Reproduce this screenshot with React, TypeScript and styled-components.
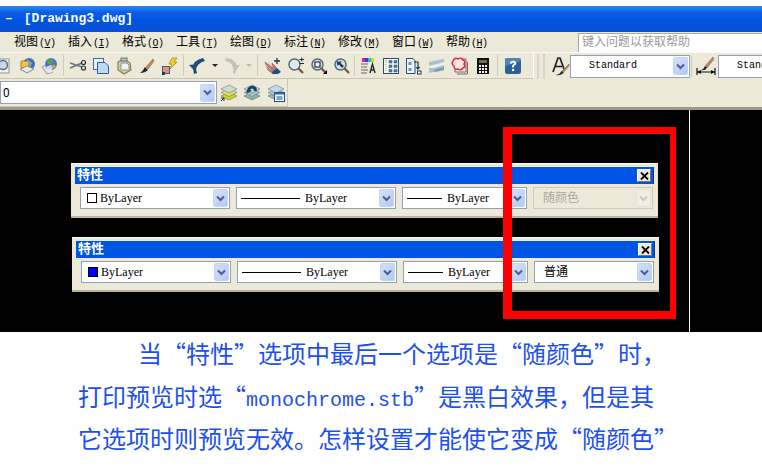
import React from 'react';
import styled, { createGlobalStyle } from 'styled-components';

const GlobalStyle = createGlobalStyle`
  html, body {
    margin: 0;
    padding: 0;
    background: #fff;
  }
`;

const cjk = '"Noto Sans CJK SC", "Noto Sans", sans-serif';
const mono = '"Liberation Mono", "Noto Sans CJK SC", monospace';
const serif = '"Liberation Serif", "Noto Sans CJK SC", serif';

const Page = styled.div`
  width: 762px;
  height: 476px;
  overflow: hidden;
  background: #fff;
  padding-top: 6px;
  box-sizing: border-box;
  font-family: ${cjk};
`;

const TitleBar = styled.div`
  height: 26px;
  display: flex;
  align-items: center;
  gap: 11px;
  padding: 0 0 2px 5px;
  box-sizing: border-box;
  background: linear-gradient(#2f86f2 0, #0a5ee6 25%, #0054e3 55%, #0a50d2 100%);
  color: #fff;
  font: bold 13px ${mono};
`;

const MenuBar = styled.div`
  height: 20px;
  display: flex;
  align-items: center;
  padding-left: 14px;
  background: #ece9d8;
  font-size: 12px;
  color: #000;
`;

const MenuItem = styled.span`
  width: 54px;
  flex: none;
  white-space: nowrap;
  margin-bottom: 3px;
`;

const MenuKey = styled.span`
  font: 10px ${mono};
  margin-left: 1px;
  letter-spacing: -0.5px;

  u {
    text-decoration-thickness: 1px;
  }
`;

const HelpBox = styled.div`
  margin-left: auto;
  width: 184px;
  height: 19px;
  box-sizing: border-box;
  padding-left: 3px;
  background: #fff;
  border-left: 1px solid #aca899;
  border-top: 1px solid #aca899;
  color: #9a9a9a;
  font-size: 12px;
  line-height: 14px;
`;

const ToolRow = styled.div`
  height: 27px;
  display: flex;
  align-items: center;
  overflow: hidden;
  background: #ece9d8;
  border-top: 1px solid #fbfaf4;
  box-sizing: border-box;
`;

const MainBar = styled.div`
  width: 542px;
  margin-left: -8px;
  flex: none;
  height: 26px;
  display: flex;
  align-items: center;
  border-right: 1px solid #fff;
  border-bottom: 1px solid #c9c6b4;
  box-sizing: border-box;
`;

const ToolButton = styled.div<{ $w?: number }>`
  width: ${(p) => p.$w ?? 23}px;
  flex: none;
  display: flex;
  align-items: center;
  justify-content: center;
`;

const Separator = styled.div<{ $mx?: number }>`
  width: 1px;
  height: 21px;
  flex: none;
  margin: 0 ${(p) => p.$mx ?? 3}px;
  background: #cfcbb8;
`;

const Grip = styled.div`
  width: 8px;
  height: 25px;
  flex: none;
  margin: 0 4px 0 3px;
  border-left: 2px solid #d8d4c2;
  border-right: 2px solid #d8d4c2;
  box-sizing: border-box;
`;

const Combo = styled.div<{ $w: number; $off?: boolean; $h?: number }>`
  width: ${(p) => p.$w}px;
  height: ${(p) => p.$h ?? 22}px;
  flex: none;
  display: flex;
  align-items: center;
  box-sizing: border-box;
  border: 1px solid ${(p) => (p.$off ? '#cdcbbd' : '#8ea3b5')};
  background: ${(p) => (p.$off ? '#ece9d8' : '#fff')};
  font: 12px ${serif};
  color: #000;
  white-space: nowrap;
`;

const ComboBody = styled.div<{ $pl?: number; $gap?: number }>`
  flex: 1;
  min-width: 0;
  display: flex;
  align-items: center;
  gap: ${(p) => p.$gap ?? 5}px;
  padding-left: ${(p) => p.$pl ?? 4}px;
`;

const ArrowBox = styled.div<{ $off?: boolean }>`
  width: 15px;
  height: 18px;
  margin-right: 1px;
  flex: none;
  display: flex;
  align-items: center;
  justify-content: center;
  border-radius: 2px;
  background: ${(p) => (p.$off ? '#f1efe4' : 'linear-gradient(135deg, #d5e1fb, #b5c9f5)')};
  border: 1px solid ${(p) => (p.$off ? '#e6e3d6' : '#c6d4f3')};
  box-sizing: border-box;
`;

const StyleName = styled.span`
  font: 10px ${mono};
  margin-bottom: 1px;
`;

const LayerRow = styled(ToolRow)`
  border-top: 0;
  border-bottom: 3px solid #9d9a8b;
  height: 31px;
`;

const LayerBar = styled.div`
  width: 288px;
  flex: none;
  height: 28px;
  display: flex;
  align-items: center;
  border-right: 1px solid #c9c6b4;
  border-bottom: 1px solid #c9c6b4;
  box-sizing: border-box;
`;

const Canvas = styled.div`
  position: relative;
  height: 222px;
  background: #000;
  padding: 53px 0 0 71px;
  box-sizing: border-box;
`;

const Crosshair = styled.div`
  position: absolute;
  left: 689px;
  top: 0;
  bottom: 0;
  width: 1px;
  background: #fff;
`;

const RedFrame = styled.div`
  position: absolute;
  left: 503px;
  top: 17px;
  width: 173px;
  height: 192px;
  box-sizing: border-box;
  border-style: solid;
  border-color: #f00;
  border-width: 7px 6px 8px 9px;
`;

const Palette = styled.div<{ $shift?: number }>`
  width: 587px;
  height: 55px;
  margin-left: ${(p) => p.$shift ?? 0}px;
  margin-bottom: 19px;
  padding: 3px 4px 0;
  box-sizing: border-box;
  background: #ece9d8;
  border-top: 1px solid #fbfaf3;
  border-bottom: 2px solid #b7b4a4;
`;

const PaletteTitle = styled.div`
  height: 17px;
  display: flex;
  align-items: center;
  justify-content: space-between;
  padding: 0 2px;
  background: #0054e3;
  color: #fff;
  border-right: 1px solid #0a3a9c;
`;

const PaletteLabel = styled.span`
  font-size: 13px;
  font-weight: bold;
  line-height: 13px;
  margin-bottom: 5px;
`;

const CloseButton = styled.div`
  width: 14px;
  height: 13px;
  display: flex;
  align-items: center;
  justify-content: center;
  background: #ece9d8;
  border: 1px solid #fff;
  border-right-color: #777;
  border-bottom-color: #777;
  box-sizing: border-box;
`;

const PaletteBody = styled.div`
  display: flex;
  gap: 6px;
  padding: 3px 0 0 5px;
`;

const Swatch = styled.span<{ $color: string }>`
  width: 10px;
  height: 10px;
  flex: none;
  box-sizing: border-box;
  border: 1px solid #000;
  background: ${(p) => p.$color};
  margin-left: 1px;
`;

const SwatchLabel = styled.span`
  margin-left: -1px;
`;

const LineSample = styled.span<{ $w: number }>`
  width: ${(p) => p.$w}px;
  height: 1px;
  flex: none;
  background: #000;
`;

const StyleLabel = styled.span<{ $off?: boolean }>`
  font: 12px ${cjk};
  color: ${(p) => (p.$off ? '#aca899' : '#000')};
  margin-bottom: 3px;
`;

const Note = styled.div`
  padding: 0 0 0 78px;
  color: #1c50ee;
  font-size: 24px;
`;

const NoteLine = styled.div<{ $indent?: number }>`
  height: 42.5px;
  line-height: 42.5px;
  white-space: nowrap;
  padding-left: ${(p) => p.$indent ?? 0}px;
`;

const Latin = styled.span`
  font: 20px/1 ${mono};
`;

const Chevron = ({ off }: { off?: boolean }) => (
  <svg width="9" height="7" viewBox="0 0 9 7">
    <path d="M1 1.5 L4.5 5 L8 1.5" fill="none" stroke={off ? '#c9c7bb' : '#4d6185'} strokeWidth="2" />
  </svg>
);

const Arrow = ({ off }: { off?: boolean }) => (
  <ArrowBox $off={off}>
    <Chevron off={off} />
  </ArrowBox>
);

const Ico = ({ children, w = 18, h = 18 }: { children: React.ReactNode; w?: number; h?: number }) => (
  <svg width={w} height={h} viewBox={`0 0 ${w} ${h}`}>
    {children}
  </svg>
);

const Magnifier = ({ glass = '#dfe9ee' }: { glass?: string }) => (
  <>
    <circle cx="7.5" cy="7.5" r="5.5" fill={glass} stroke="#54686f" strokeWidth="1.4" />
    <path d="M11.5 11.5 L16 16" stroke="#7a5a3a" strokeWidth="2.4" />
  </>
);

const PreviewIcon = () => (
  <Ico>
    <rect x="2" y="2" width="12" height="14" fill="#f2f2f2" stroke="#8a9aa8" />
    <circle cx="8" cy="8" r="4.5" fill="#c8d8e6" stroke="#5b6d7d" strokeWidth="1.4" />
  </Ico>
);
const PublishIcon = () => (
  <Ico>
    <circle cx="11" cy="7" r="6" fill="#3f6fc4" />
    <path d="M9 2 L14 6 L11 12 Z" fill="#7fb0e6" />
    <rect x="3" y="4" width="8" height="7" rx="1" fill="#f0c93a" stroke="#9a7a18" />
    <path d="M2 12 L9 9 L16 12 L9 16 Z" fill="#e8e8e8" stroke="#8a8a8a" />
  </Ico>
);
const GlobeIcon = () => (
  <Ico>
    <path d="M1 10 L9 6 L12 15 L6 17 Z" fill="#dcdcdc" stroke="#9a9aa6" />
    <circle cx="10" cy="7" r="6" fill="#3f7bd0" />
    <path d="M6 3 Q10 1 13 4 Q11 8 7 7 Z" fill="#5aa04a" />
    <path d="M10 8 Q14 7 15 10 Q12 13 10 11 Z" fill="#d8a03a" />
    <path d="M5 10 L10 8 L12 15 L7 16 Z" fill="#eaeaf2" opacity="0.85" />
  </Ico>
);
const ScissorsIcon = () => (
  <Ico>
    <path d="M1 6 L13 10 M1 11 L13 6" stroke="#6b7480" strokeWidth="1.5" />
    <circle cx="14.5" cy="5.5" r="2" fill="none" stroke="#25303a" strokeWidth="1.2" />
    <circle cx="14.5" cy="11" r="2" fill="none" stroke="#25303a" strokeWidth="1.2" />
  </Ico>
);
const CopyIcon = () => (
  <Ico>
    <rect x="1.5" y="1.5" width="10" height="11" fill="#e9f2fb" stroke="#3f6f9f" />
    <path d="M5.5 5.5 H13 L16.5 9 V16.5 H5.5 Z" fill="#bcd9f0" stroke="#2f5f95" />
  </Ico>
);
const PasteIcon = () => (
  <Ico>
    <path d="M3 5 L9 2 L15 6 L16 13 L9 17 L3 13 Z" fill="#d8cfa0" stroke="#8d8340" strokeWidth="1.2" />
    <rect x="6" y="1" width="6" height="3" fill="#b8bcc0" stroke="#70757a" />
    <path d="M6 6 H12 L14 8 V13 H6 Z" fill="#eef3f8" stroke="#7f94aa" />
  </Ico>
);
const BrushIcon = () => (
  <Ico>
    <path d="M15 2 L8 10 L10 12 L16 4 Z" fill="#c9825f" stroke="#8a4f38" strokeWidth="0.5" />
    <path d="M7 10 L10 13 Q7 16 2 16 Q5 14 7 10 Z" fill="#23272b" />
  </Ico>
);
const MatchIcon = () => (
  <Ico>
    <path d="M11 1 H16 L13 5 H16 L9 12 L11 7 H8 Z" fill="#f2d21f" stroke="#8a7a18" strokeWidth="0.6" />
    <rect x="1.5" y="9.5" width="7" height="7" fill="#e8907a" stroke="#3d5f80" />
    <rect x="1" y="15" width="3" height="3" fill="#1c3f6a" />
  </Ico>
);
const UndoIcon = ({ color = '#1f4a7d' }: { color?: string }) => (
  <Ico w={20}>
    <path d="M8 16 Q5 9 13 5 L16 4 L14 1 Q4 3 4 11 L5 17 Z" fill={color} transform="translate(1 0)" />
    <path d="M1 8 L6 13 L10 7 Z" fill={color} />
  </Ico>
);
const RedoIcon = () => (
  <Ico w={20}>
    <path d="M4 1 L9 2 Q15 5 15 11 L13 17 L11 16 Q13 9 7 5 L3 4 Z" fill="#c3c3b8" />
    <path d="M10 8 L18 8 L13 14 Z" fill="#c3c3b8" />
  </Ico>
);
const DropTick = ({ off }: { off?: boolean }) => (
  <svg width="6" height="3" viewBox="0 0 6 3">
    <path d="M0 0 H6 L3 3 Z" fill={off ? '#bdbdb2' : '#1a2a3a'} />
  </svg>
);
const PanIcon = () => (
  <Ico>
    <path d="M1 5 L9 11 L8 6 L12 10 L13 15 L9 17 L4 13 Z" fill="#b87a78" stroke="#83605f" strokeWidth="0.6" />
    <path d="M2 8 L7 13 M4 5 L9 10" stroke="#e0c5c0" strokeWidth="0.8" />
    <path d="M8 15 L13 11 L17 15 L14 17 H9 Z" fill="#1f4f80" />
    <path d="M13 1 V7 M10 4 H16" stroke="#1d3550" strokeWidth="1.3" />
  </Ico>
);
const ZoomPlusIcon = () => (
  <Ico>
    <Magnifier />
    <path d="M12.5 2.5 H17 M14.7 0.5 V4.5 M12.5 6.5 H17" stroke="#22303a" strokeWidth="1" />
  </Ico>
);
const ZoomWindowIcon = () => (
  <Ico>
    <Magnifier glass="#cfdde6" />
    <rect x="5" y="5" width="5" height="5" fill="#eef3f6" stroke="#20384f" strokeWidth="1.2" />
    <path d="M17 13 V17 H13 Z" fill="#000" />
  </Ico>
);
const ZoomPrevIcon = () => (
  <Ico>
    <Magnifier glass="#d5e0e6" />
    <path d="M3.5 4.5 H9 L7.5 6 L11 9 L9 11 L6 7.5 L4.5 9 Z" fill="#1f3f63" />
  </Ico>
);
const PropsIcon = () => (
  <Ico>
    <rect x="3" y="1" width="3" height="4" fill="#e0208c" />
    <rect x="6" y="1" width="3" height="4" fill="#2a3fe0" />
    <rect x="9" y="1" width="3" height="4" fill="#18c0d8" />
    <rect x="12" y="1" width="3" height="4" fill="#e8d020" />
    <path d="M2 7 H9 M2 10 H8 M2 13 H9 M2 16 H8" stroke="#6a6a60" strokeWidth="1.2" />
    <path d="M11 16 L13.5 7 L16 16 M12 13 H15" fill="none" stroke="#1e2a36" strokeWidth="1.4" />
  </Ico>
);
const DesignIcon = () => (
  <Ico>
    <rect x="1.5" y="1.5" width="15" height="15" fill="#f4f6f2" stroke="#24507f" />
    <path d="M4 3 V15" stroke="#9a9a5a" strokeDasharray="1 1" />
    <path d="M7 3.5 H10 V6 H7 Z M12 3.5 H15 V6 H12 Z M7 8 H10 V10.5 H7 Z M12 8 H15 V10.5 H12 Z M7 12.5 H10 V15 H7 Z M12 12.5 H15 V15 H12 Z" fill="#5a7fa0" stroke="#24507f" strokeWidth="0.5" />
  </Ico>
);
const ToolPaletteIcon = () => (
  <Ico>
    <path d="M1.5 1.5 H8 L10 3.5 V16.5 H1.5 Z" fill="#eef4f8" stroke="#24507f" />
    <rect x="3.5" y="5" width="3" height="3" fill="#6f93b5" />
    <rect x="3.5" y="11" width="3" height="3" fill="#6f93b5" />
    <path d="M9 5 H13 V11" fill="none" stroke="#26323e" strokeWidth="1.2" />
    <path d="M10.5 10 H15.5 L13 13 Z" fill="#1f3f63" />
    <rect x="12.5" y="14" width="3.5" height="3" fill="#fff" stroke="#26323e" />
  </Ico>
);
const SheetIcon = () => (
  <Ico>
    <path d="M1 5 L16 2 V13 L1 16 Z" fill="#a9bfcd" />
    <path d="M1 9 L16 5 V8 L6 11 L1 11 Z" fill="#e8eef2" />
    <path d="M6 13 L16 10 V13 L7 15 Z" fill="#7e9cb0" />
  </Ico>
);
const MarkupIcon = () => (
  <Ico>
    <path d="M4 2 H15 V15 H4 Z" fill="#f3eee0" stroke="#6f6f68" />
    <path d="M16.5 5 V17 H6" fill="none" stroke="#6f6f68" />
    <path d="M2 4 Q4 0 7 2 Q10 0 12 3 Q15 4 13 7 Q15 10 12 11 Q10 14 7 12 Q3 13 3 9 Q0 7 2 4 Z" fill="#fbe3e6" stroke="#e02848" strokeWidth="1.5" />
  </Ico>
);
const CalcIcon = () => (
  <Ico>
    <rect x="3" y="1" width="12" height="16" fill="#111" />
    <rect x="5" y="3" width="8" height="3" fill="#6a6f58" />
    <path d="M5 8 H7 V10 H5 Z M8 8 H10 V10 H8 Z M11 8 H13 V10 H11 Z M5 11 H7 V13 H5 Z M8 11 H10 V13 H8 Z M11 11 H13 V13 H11 Z M5 14 H7 V16 H5 Z M8 14 H10 V16 H8 Z M11 14 H13 V16 H11 Z" fill="#f4f4f4" />
  </Ico>
);
const HelpIcon = () => (
  <Ico>
    <rect x="1" y="1" width="16" height="16" rx="2.5" fill="#2d6096" />
    <path d="M1 9 L17 4 V3 Q17 1 15 1 H3 Q1 1 1 3 Z" fill="#4f86bb" />
    <path d="M6 6.5 Q6 3.8 9 3.8 Q12.3 3.8 12.3 6.3 Q12.3 8 10 9 V10.5 H8 V8.2 Q10.2 7.4 10.2 6.3 Q10.2 5.5 9 5.5 Q8 5.5 8 6.8 Z" fill="#fff" />
    <rect x="8" y="12" width="2.1" height="2.1" fill="#fff" />
  </Ico>
);
const TextStyleIcon = () => (
  <Ico w={20} h={20}>
    <path d="M3 16 L8 2 H10 L14 13 M5 10.5 H12" fill="none" stroke="#1e2228" strokeWidth="1.7" />
    <path d="M19 8 L11 16 L13 17 L19 10 Z" fill="#b98a62" stroke="#7a5a3a" strokeWidth="0.5" />
    <path d="M6 19 Q10 18 12 15 L13.5 17 Q10 20 6 19 Z" fill="#23272b" />
  </Ico>
);
const DimStyleIcon = () => (
  <Ico w={20} h={20}>
    <path d="M1 12 V19 M19 12 V19 M1 16 H19" stroke="#111" strokeWidth="1.2" />
    <path d="M1 16 L5 14 V18 Z M19 16 L15 14 V18 Z" fill="#111" />
    <path d="M17 1 L9 10 L11 12 L18 3 Z" fill="#b98a62" stroke="#7a5a3a" strokeWidth="0.5" />
    <path d="M5 14 Q8 13 9 10 L11 12 Q9 15 5 14 Z" fill="#23272b" />
  </Ico>
);
const LayerStack = ({ top, mid, low }: { top: string; mid: string; low: string }) => (
  <>
    <path d="M1 12 L9 8 L17 12 L9 16 Z" fill={low} stroke="#5f7a5a" strokeWidth="0.6" />
    <path d="M1 8.5 L9 4.5 L17 8.5 L9 12.5 Z" fill={mid} stroke="#5f7a7a" strokeWidth="0.6" />
    <path d="M1 5 L9 1 L17 5 L9 9 Z" fill={top} stroke="#5f7a8a" strokeWidth="0.6" />
  </>
);
const LayerIcon = () => (
  <Ico>
    <LayerStack top="#cfdcd0" mid="#e8e05a" low="#d8d020" />
    <path d="M1 17 L4 14 M1 14 H4 V17" fill="none" stroke="#1c3050" strokeWidth="1" />
  </Ico>
);
const LayerPrevIcon = () => (
  <Ico>
    <LayerStack top="#c6d6de" mid="#a9c2c8" low="#8fb0a8" />
    <path d="M4 6 Q6 1 11 2 Q14 3 14 7 L11 7 Q11 4.5 9 4.5 Q8 4.5 7 6 L9 7 L3.5 9.5 Z" fill="#1f3f63" />
  </Ico>
);
const LayerStateIcon = () => (
  <Ico>
    <LayerStack top="#c6d8e6" mid="#a9cadb" low="#8fb5cc" />
    <rect x="7.5" y="8.5" width="10" height="9" fill="#f2f7fb" stroke="#1c4f80" />
    <rect x="7.5" y="8.5" width="10" height="2" fill="#2a6bb0" />
    <path d="M9.5 13 H15.5 M9.5 15 H15.5" stroke="#1c4f80" />
  </Ico>
);
const CloseGlyph = () => (
  <svg width="9" height="8" viewBox="0 0 9 8">
    <path d="M1 0.5 L8 7.5 M8 0.5 L1 7.5" stroke="#000" strokeWidth="1.8" />
  </svg>
);

const menus: [string, string][] = [
  ['视图', 'V'],
  ['插入', 'I'],
  ['格式', 'O'],
  ['工具', 'T'],
  ['绘图', 'D'],
  ['标注', 'N'],
  ['修改', 'M'],
  ['窗口', 'W'],
  ['帮助', 'H'],
];

const PropertyPalette = ({ swatch, shift, last, off }: { swatch: string; shift?: number; last: string; off?: boolean }) => (
  <Palette $shift={shift}>
    <PaletteTitle>
      <PaletteLabel>特性</PaletteLabel>
      <CloseButton>
        <CloseGlyph />
      </CloseButton>
    </PaletteTitle>
    <PaletteBody>
      <Combo $w={150}>
        <ComboBody $gap={4} $pl={5}>
          <Swatch $color={swatch} />
          <SwatchLabel>ByLayer</SwatchLabel>
        </ComboBody>
        <Arrow />
      </Combo>
      <Combo $w={160}>
        <ComboBody>
          <LineSample $w={59} />
          ByLayer
        </ComboBody>
        <Arrow />
      </Combo>
      <Combo $w={125}>
        <ComboBody>
          <LineSample $w={35} />
          ByLayer
        </ComboBody>
        <Arrow />
      </Combo>
      <Combo $w={120} $off={off}>
        <ComboBody $pl={9}>
          <StyleLabel $off={off}>{last}</StyleLabel>
        </ComboBody>
        <Arrow off={off} />
      </Combo>
    </PaletteBody>
  </Palette>
);

export default function App() {
  return (
    <Page lang="zh-CN">
      <GlobalStyle />
      <TitleBar>
        <span>–</span>
        <span>[Drawing3.dwg]</span>
      </TitleBar>
      <MenuBar>
        {menus.map(([label, key]) => (
          <MenuItem key={key}>
            {label}
            <MenuKey>
              (<u>{key}</u>)
            </MenuKey>
          </MenuItem>
        ))}
        <HelpBox>键入问题以获取帮助</HelpBox>
      </MenuBar>
      <ToolRow>
        <MainBar>
          <ToolButton><PreviewIcon /></ToolButton>
          <ToolButton><PublishIcon /></ToolButton>
          <ToolButton><GlobeIcon /></ToolButton>
          <Separator $mx={2} />
          <ToolButton><ScissorsIcon /></ToolButton>
          <ToolButton><CopyIcon /></ToolButton>
          <ToolButton><PasteIcon /></ToolButton>
          <ToolButton><BrushIcon /></ToolButton>
          <ToolButton><MatchIcon /></ToolButton>
          <Separator $mx={2} />
          <ToolButton $w={24}><UndoIcon /></ToolButton>
          <ToolButton $w={10}><DropTick /></ToolButton>
          <ToolButton $w={24}><RedoIcon /></ToolButton>
          <ToolButton $w={10}><DropTick off /></ToolButton>
          <Separator />
          <ToolButton><PanIcon /></ToolButton>
          <ToolButton><ZoomPlusIcon /></ToolButton>
          <ToolButton><ZoomWindowIcon /></ToolButton>
          <ToolButton><ZoomPrevIcon /></ToolButton>
          <Separator $mx={1} />
          <ToolButton><PropsIcon /></ToolButton>
          <ToolButton><DesignIcon /></ToolButton>
          <ToolButton><ToolPaletteIcon /></ToolButton>
          <ToolButton><SheetIcon /></ToolButton>
          <ToolButton><MarkupIcon /></ToolButton>
          <ToolButton><CalcIcon /></ToolButton>
          <Separator />
          <ToolButton><HelpIcon /></ToolButton>
        </MainBar>
        <Grip />
        <ToolButton $w={21}><TextStyleIcon /></ToolButton>
        <Combo $w={120} $h={23}>
          <ComboBody $pl={18}>
            <StyleName>Standard</StyleName>
          </ComboBody>
          <Arrow />
        </Combo>
        <Separator $mx={1} />
        <ToolButton $w={25}><DimStyleIcon /></ToolButton>
        <Combo $w={120} $h={23}>
          <ComboBody $pl={18}>
            <StyleName>Standard</StyleName>
          </ComboBody>
          <Arrow />
        </Combo>
      </ToolRow>
      <LayerRow>
        <LayerBar>
          <Combo $w={217} $h={23}>
            <ComboBody $pl={2}>
              <StyleLabel>0</StyleLabel>
            </ComboBody>
            <Arrow />
          </Combo>
          <ToolButton $w={23}><LayerIcon /></ToolButton>
          <ToolButton $w={24}><LayerPrevIcon /></ToolButton>
          <ToolButton $w={23}><LayerStateIcon /></ToolButton>
        </LayerBar>
      </LayerRow>
      <Canvas>
        <PropertyPalette swatch="#fff" last="随颜色" off />
        <PropertyPalette swatch="#0000ff" shift={1} last="普通" />
        <Crosshair />
        <RedFrame />
      </Canvas>
      <Note>
        <NoteLine $indent={60}>当“特性”选项中最后一个选项是“随颜色”时，</NoteLine>
        <NoteLine>
          打印预览时选“<Latin>monochrome.stb</Latin>”是黑白效果，但是其
        </NoteLine>
        <NoteLine>它选项时则预览无效。怎样设置才能使它变成“随颜色”</NoteLine>
      </Note>
    </Page>
  );
}
